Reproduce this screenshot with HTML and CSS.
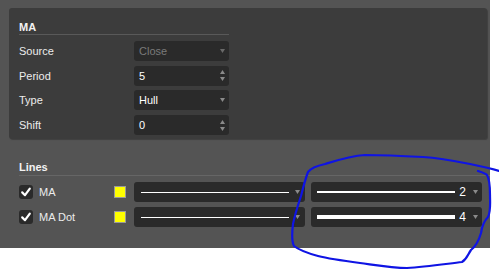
FILE: index.html
```html
<!DOCTYPE html>
<html>
<head>
<meta charset="utf-8">
<link rel="stylesheet" href="styles.css">
</head>
<body>
<div class="dialog">
  <section class="panel">
    <div class="title">MA</div>
    <div class="form">
      <div class="row">
        <span class="label">Source</span>
        <div class="field disabled"><span class="val">Close</span>
          <svg class="arrow" width="5" height="4" viewBox="0 0 5 4"><path d="M0 0h5L2.5 4z" fill="#6a6a6a"/></svg>
        </div>
      </div>
      <div class="row">
        <span class="label">Period</span>
        <div class="field"><span class="val">5</span>
          <svg class="spin" width="5" height="11" viewBox="0 0 5 11"><path d="M2.5 0L5 4H0z M0 7h5L2.5 11z" fill="#8a8a8a"/></svg>
        </div>
      </div>
      <div class="row">
        <span class="label">Type</span>
        <div class="field"><span class="val">Hull</span>
          <svg class="arrow" width="5" height="4" viewBox="0 0 5 4"><path d="M0 0h5L2.5 4z" fill="#8a8a8a"/></svg>
        </div>
      </div>
      <div class="row">
        <span class="label">Shift</span>
        <div class="field"><span class="val">0</span>
          <svg class="spin" width="5" height="11" viewBox="0 0 5 11"><path d="M2.5 0L5 4H0z M0 7h5L2.5 11z" fill="#8a8a8a"/></svg>
        </div>
      </div>
    </div>
  </section>

  <section class="lines">
    <div class="title ltitle">Lines</div>
    <div class="lrows">
      <div class="lrow">
        <span class="check"><svg width="14" height="14" viewBox="0 0 14 14"><path d="M3.2 7.4L6 10.2L10.8 3.6" fill="none" stroke="#fff" stroke-width="2.2" stroke-linecap="round" stroke-linejoin="round"/></svg></span>
        <span class="lname">MA</span>
        <span class="swatch"></span>
        <div class="drop style"><span class="stroke" style="height:1px"></span>
          <svg class="arrow" width="5" height="4" viewBox="0 0 5 4"><path d="M0 0h5L2.5 4z" fill="#8a8a8a"/></svg>
        </div>
        <div class="drop width"><span class="stroke" style="height:2px"></span><span class="num">2</span>
          <svg class="arrow" width="5" height="4" viewBox="0 0 5 4"><path d="M0 0h5L2.5 4z" fill="#8a8a8a"/></svg>
        </div>
      </div>
      <div class="lrow">
        <span class="check"><svg width="14" height="14" viewBox="0 0 14 14"><path d="M3.2 7.4L6 10.2L10.8 3.6" fill="none" stroke="#fff" stroke-width="2.2" stroke-linecap="round" stroke-linejoin="round"/></svg></span>
        <span class="lname">MA Dot</span>
        <span class="swatch"></span>
        <div class="drop style"><span class="stroke" style="height:1px"></span>
          <svg class="arrow" width="5" height="4" viewBox="0 0 5 4"><path d="M0 0h5L2.5 4z" fill="#8a8a8a"/></svg>
        </div>
        <div class="drop width"><span class="stroke" style="height:4px"></span><span class="num">4</span>
          <svg class="arrow" width="5" height="4" viewBox="0 0 5 4"><path d="M0 0h5L2.5 4z" fill="#8a8a8a"/></svg>
        </div>
      </div>
    </div>
  </section>
</div>

<svg class="annot" width="499" height="270" viewBox="0 0 499 270">
  <path d="M499,171 C490,168 480,166 470,164 C455,161 440,158 423,157 C405,156 385,155 365,155 C350,156 338,160 325,164 C316,166 311,168 308,172 C305,180 303,188 301,196 C298,205 295,214 293,224 C292,232 291,240 294,246 C299,250 307,253 318,256 C330,259 345,261 360,263 C375,265 392,268 407,268 C425,267 445,264 462,262 C467,259 468,254 471,250 C476,246 479,240 481,233 C482,226 484,221 488,217 C491,211 490,203 490,195 C490,187 490,180 487,175 C485,173 481,172 478,171" fill="none" stroke="#0f14e4" stroke-width="2.2" stroke-linecap="round" stroke-linejoin="round"/>
</svg>
</body>
</html>
```

FILE: styles.css
```css
html, body {
  margin: 0;
  padding: 0;
  background: #ffffff;
}

body {
  font-family: "Liberation Sans", Arial, sans-serif;
  font-size: 11px;
  color: #ececec;
  position: relative;
  width: 499px;
  height: 270px;
  overflow: hidden;
}

.dialog {
  width: 490px;
  height: 248px;
  background: #545454;
  padding-top: 8px;
  box-sizing: border-box;
  display: flex;
  flex-direction: column;
}

.panel {
  margin: 0 3px 0 9px;
  height: 131px;
  box-sizing: border-box;
  background: #3c3c3c;
  border-radius: 3px;
  box-shadow: 1px 1px 1px rgba(0, 0, 0, 0.25);
  padding: 12px 0 0 10px;
}

.title {
  width: 210px;
  line-height: 14px;
  font-weight: bold;
  color: #f2f2f2;
  border-bottom: 1px solid #595959;
}

.form {
  width: 210px;
  margin-top: 6px;
  display: flex;
  flex-direction: column;
  gap: 4.7px;
}

.row {
  display: flex;
  align-items: center;
  height: 20px;
}

.label {
  width: 115px;
}

.field {
  width: 95px;
  height: 20px;
  box-sizing: border-box;
  background: #2a2a2a;
  border-radius: 3px;
  display: flex;
  align-items: center;
  padding: 0 4px 0 5px;
  color: #ffffff;
  line-height: 20px;
}

.field.disabled {
  color: #7a7a7a;
}

.val {
  flex: 1;
}

.arrow,
.spin {
  display: block;
  flex: none;
}

.lines {
  padding-left: 19px;
  margin-top: 21px;
}

.ltitle {
  width: auto;
  padding-bottom: 1px;
  border-bottom: 1px solid #666666;
}

.lrows {
  margin-top: 6px;
  display: flex;
  flex-direction: column;
  gap: 5px;
}

.lrow {
  display: flex;
  align-items: center;
  height: 20px;
}

.check {
  width: 14px;
  height: 14px;
  background: #2a2a2a;
  border-radius: 3px;
  display: block;
  flex: none;
}

.check svg {
  display: block;
}

.lname {
  margin-left: 6px;
  width: 75px;
  color: #ececec;
}

.swatch {
  width: 10px;
  height: 10px;
  background: #ffff00;
  border: 1px solid #9a9a9a;
  flex: none;
}

.drop {
  width: 171px;
  height: 20px;
  box-sizing: border-box;
  background: #2a2a2a;
  border-radius: 3px;
  display: flex;
  align-items: center;
  flex: none;
}

.drop.style {
  margin-left: 8px;
  padding: 0 5px 0 7px;
}

.drop.style .stroke {
  margin-right: 6px;
}

.drop.width {
  margin-left: 6px;
  padding: 0 4px 0 6px;
}

.stroke {
  flex: 1;
  background: #ffffff;
  display: block;
}

.num {
  color: #ffffff;
  font-size: 12px;
  margin-left: 4px;
  margin-right: 7px;
  line-height: 20px;
}

.annot {
  position: absolute;
  left: 0;
  top: 0;
  pointer-events: none;
}
```
